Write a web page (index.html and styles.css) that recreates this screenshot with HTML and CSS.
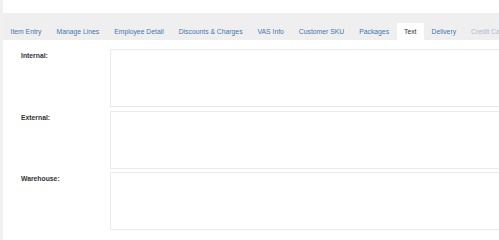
FILE: index.html
```html
<!DOCTYPE html>
<html>
<head>
  <meta charset="utf-8" />
  <title>Order Text</title>
  <link rel="stylesheet" href="styles.css">
</head>
<body>
  <div class="page">
    <div class="top"></div>
    <ul class="tabs">
      <li class="tab">Item Entry</li>
      <li class="tab">Manage Lines</li>
      <li class="tab">Employee Detail</li>
      <li class="tab">Discounts &amp; Charges</li>
      <li class="tab">VAS Info</li>
      <li class="tab">Customer SKU</li>
      <li class="tab">Packages</li>
      <li class="tab active">Text</li>
      <li class="tab">Delivery</li>
      <li class="tab disabled">Credit Card</li>
    </ul>
    <form class="text-form">
      <div class="row">
        <label for="internal">Internal:</label>
        <textarea id="internal"></textarea>
      </div>
      <div class="row">
        <label for="external">External:</label>
        <textarea id="external"></textarea>
      </div>
      <div class="row">
        <label for="warehouse">Warehouse:</label>
        <textarea id="warehouse"></textarea>
      </div>
    </form>
  </div>
</body>
</html>
```

FILE: styles.css
```css
html, body {
  height: 100%;
}
body {
  margin: 0;
  background-color: #f0f0f0;
  font-family: "Liberation Sans", Arial, sans-serif;
  overflow: hidden;
}
.page {
  margin-left: 3px;
  min-height: 100%;
  background-color: #ffffff;
}
.top {
  height: 13px;
}
.tabs {
  display: flex;
  align-items: flex-end;
  height: 27px;
  margin: 0;
  padding: 0;
  list-style: none;
  background-color: #efefef;
  white-space: nowrap;
}
.tab {
  flex: none;
  height: 17px;
  padding: 0 7.5px;
  line-height: 17px;
  font-size: 6.8px;
  color: #3f78b0;
}
.tab.active {
  background-color: #ffffff;
  color: #333333;
}
.tab.disabled {
  color: #a9bccf;
}
.text-form {
  display: flex;
  flex-direction: column;
  gap: 3.5px;
  padding-top: 9px;
}
.row {
  display: flex;
}
.row label {
  flex: none;
  width: 89px;
  padding-left: 18px;
  padding-top: 3px;
  font-size: 6.8px;
  line-height: 8px;
  font-weight: bold;
  color: #333333;
}
.row textarea {
  flex: none;
  box-sizing: border-box;
  width: 440px;
  height: 58px;
  margin: 0;
  border: 1px solid #ebebeb;
  resize: none;
  background-color: #ffffff;
}
```
